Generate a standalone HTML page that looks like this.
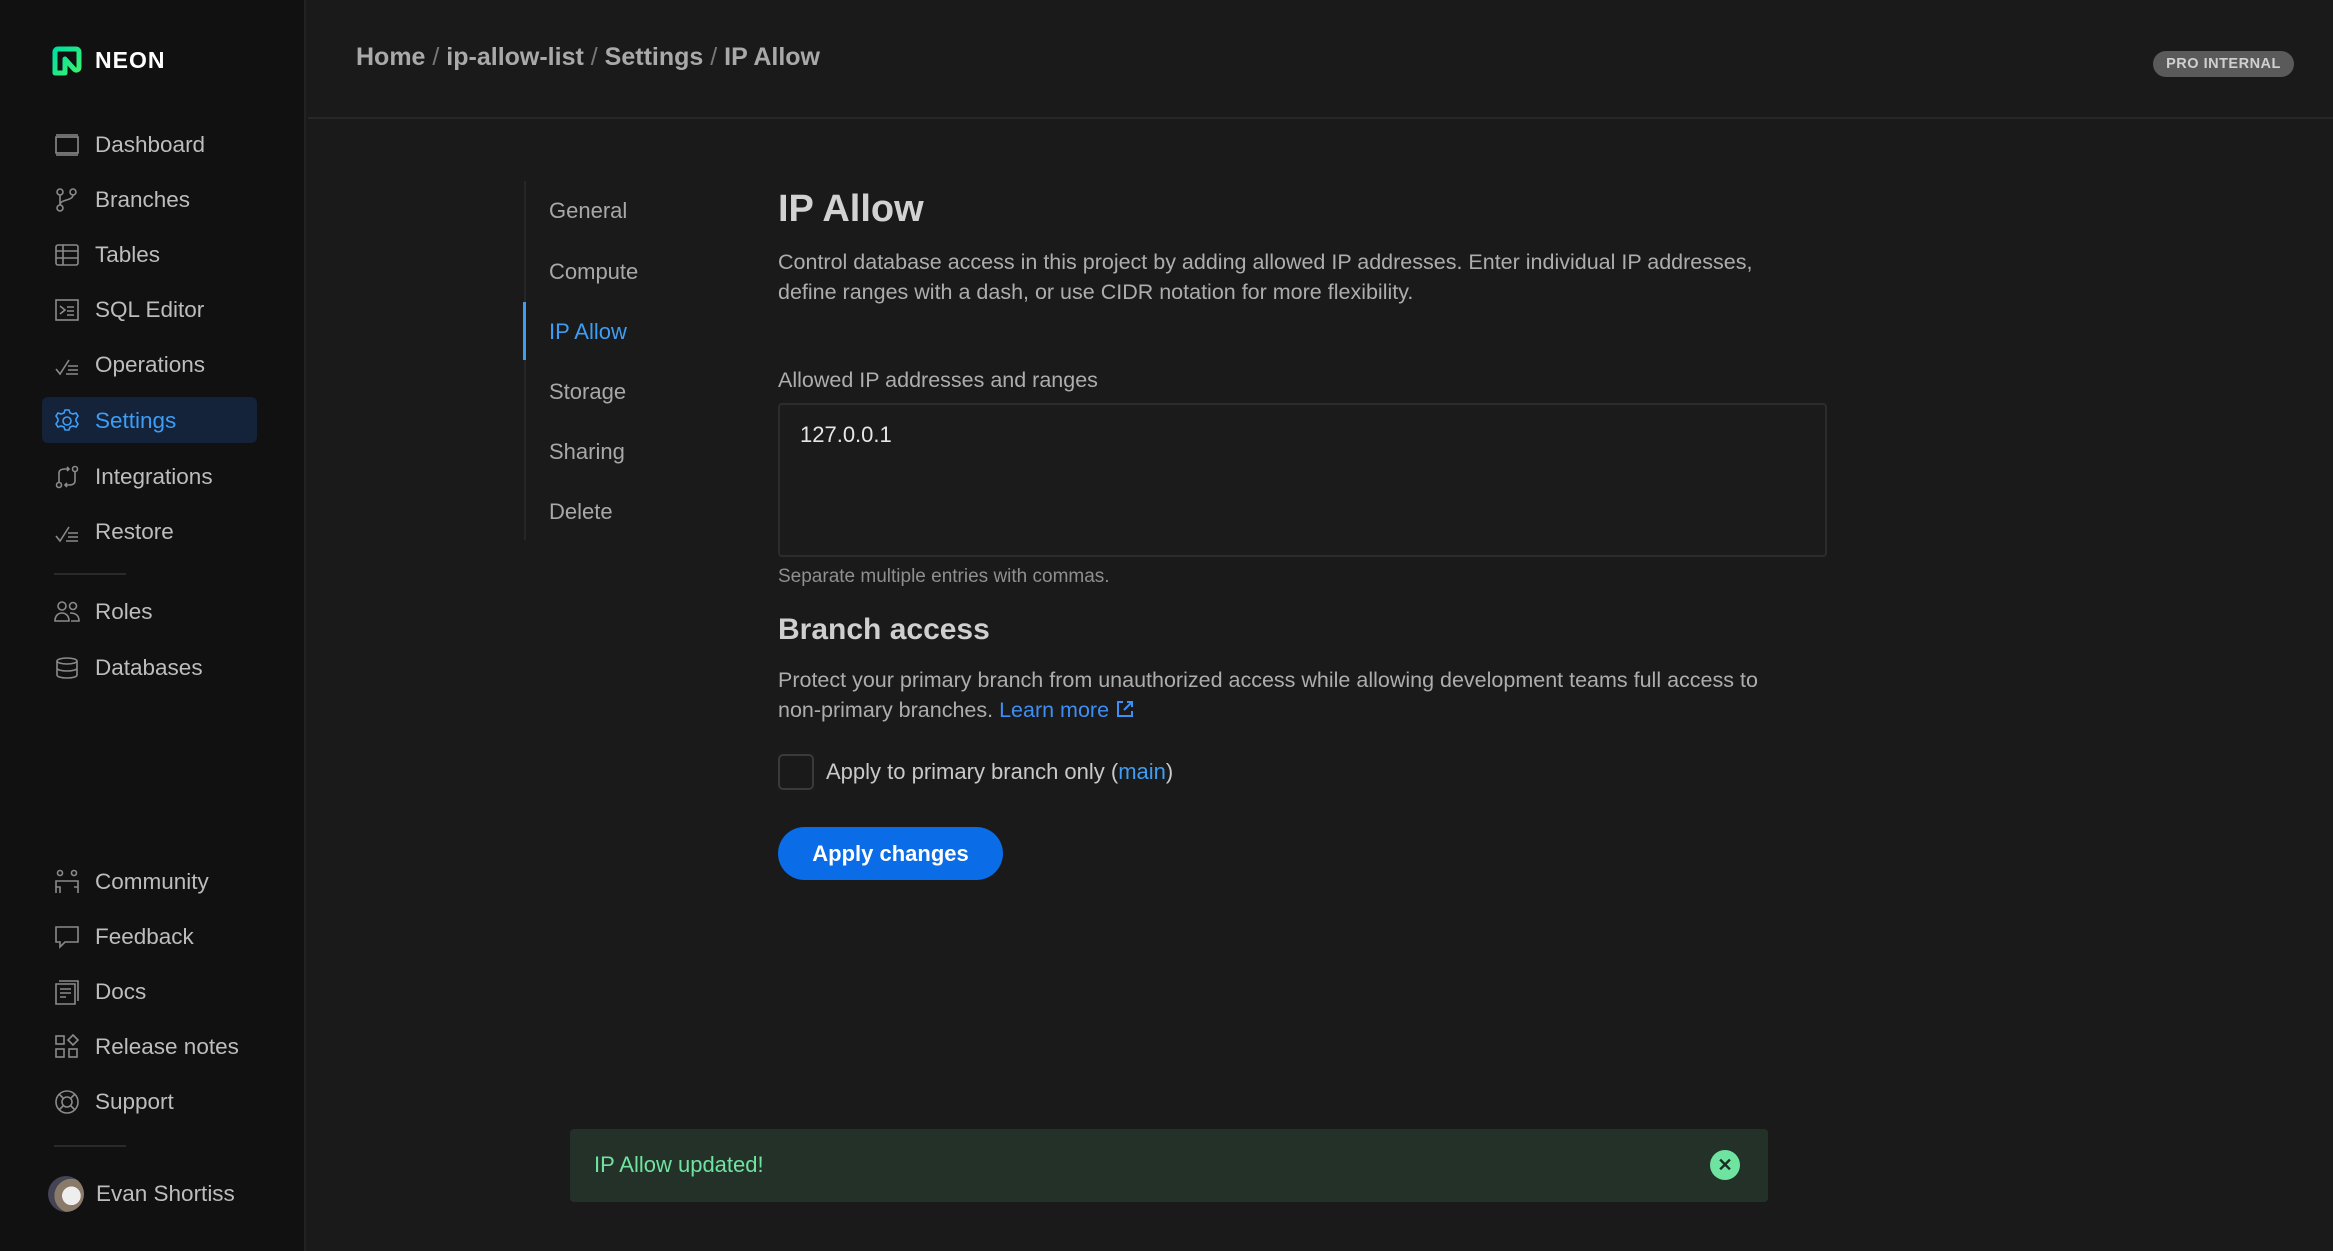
<!DOCTYPE html>
<html><head><meta charset="utf-8"><style>
*{box-sizing:border-box;margin:0;padding:0}
body{width:2333px;height:1251px;background:#1a1a1a;font-family:"Liberation Sans",sans-serif;position:relative;overflow:hidden;color:#c9c9c9}
.abs{position:absolute}
#side{left:0;top:0;width:306px;height:1251px;background:#111;border-right:2px solid #222}
.nav{position:absolute;left:54px;height:40px;display:flex;align-items:center;font-size:22.5px;color:#bdbdbd;font-weight:400;top:0}
.nav svg{width:26px;height:26px;margin-right:15px;stroke:#8a8a8a;fill:none;stroke-width:1.6}
.hl{left:42px;top:397px;width:215px;height:46px;background:#14233a;border-radius:6px}
.div{height:2px;background:#2a2a2a;width:72px;left:54px}
#hdr{left:308px;top:0;right:0;height:119px;border-bottom:2px solid #272727}
.sub{position:absolute;left:549px;font-size:22px;color:#a8a8a8;font-weight:500}
p.t{font-size:21.5px;line-height:30px;color:#adadad}
</style></head><body>
<div id="side" class="abs">
 <svg class="abs" style="left:51px;top:45px" width="32" height="32" viewBox="0 0 32 32"><defs><linearGradient id="g" x1="0" y1="0" x2="1" y2="1"><stop offset="0" stop-color="#00e0a0"/><stop offset="1" stop-color="#3cf06e"/></linearGradient></defs><path d="M4 28V7a3 3 0 0 1 3-3h18a3 3 0 0 1 3 3v15c0 3-3 4-5 2l-9-10v14z" fill="none" stroke="url(#g)" stroke-width="5" stroke-linejoin="round"/></svg>
 <div class="abs" style="left:95px;top:47px;font-size:23px;font-weight:700;color:#fff;letter-spacing:1px">NEON</div>
 <div class="abs hl"></div>
 <div class="nav" style="top:125px"><svg viewBox="0 0 26 26"><rect x="2" y="5" width="22" height="16"/><path d="M2 3h22M2 23h22"/></svg>Dashboard</div>
 <div class="nav" style="top:180px"><svg viewBox="0 0 26 26"><circle cx="6" cy="5" r="3"/><circle cx="19" cy="5" r="3"/><circle cx="6" cy="21" r="3"/><path d="M6 8v10M19 8c0 6-13 4-13 10"/></svg>Branches</div>
 <div class="nav" style="top:235px"><svg viewBox="0 0 26 26"><rect x="2" y="3" width="22" height="20" rx="2"/><path d="M2 9h22M2 16h22M9 3v20"/></svg>Tables</div>
 <div class="nav" style="top:290px"><svg viewBox="0 0 26 26"><rect x="2" y="3" width="22" height="20"/><path d="M6 9l5 4-5 4M13 10h7M13 14h7M13 18h7"/></svg>SQL Editor</div>
 <div class="nav" style="top:345px"><svg viewBox="0 0 26 26"><path d="M2 17l4 5 9-14M14 14h10M14 18h10M12 22h12"/></svg>Operations</div>
 <div class="nav" style="top:401px;color:#3d9df5"><svg viewBox="0 0 26 26" style="stroke:#3d9df5"><circle cx="13" cy="13" r="4"/><path d="M11 2h4l1 3 3 1 3-1 2 3-2 3v2l2 3-2 3-3-1-3 1-1 3h-4l-1-3-3-1-3 1-2-3 2-3v-2L2 8l2-3 3 1 3-1z"/></svg>Settings</div>
 <div class="nav" style="top:457px"><svg viewBox="0 0 26 26"><circle cx="5" cy="21" r="2.5"/><circle cx="21" cy="5" r="2.5"/><path d="M5 18V9c0-3 3-4 6-4h4M21 8v9c0 3-3 4-6 4h-4M13 3l2 2-2 2M13 19l-2 2 2 2"/></svg>Integrations</div>
 <div class="nav" style="top:512px"><svg viewBox="0 0 26 26"><path d="M2 17l4 5 9-14M14 14h10M14 18h10M12 22h12"/></svg>Restore</div>
 <div class="abs div" style="top:573px"></div>
 <div class="nav" style="top:592px"><svg viewBox="0 0 26 26"><circle cx="8" cy="7" r="4"/><circle cx="19" cy="7" r="3.5"/><path d="M1 22c0-6 4-8 7-8s7 2 7 8zM16 14c5 0 9 2 9 8h-8"/></svg>Roles</div>
 <div class="nav" style="top:648px"><svg viewBox="0 0 26 26"><ellipse cx="13" cy="6" rx="10" ry="3"/><path d="M3 6v14c0 2 5 3 10 3s10-1 10-3V6M3 13c0 2 5 3 10 3s10-1 10-3"/></svg>Databases</div>
 <div class="nav" style="top:862px"><svg viewBox="0 0 26 26"><circle cx="6" cy="4" r="2.5"/><circle cx="20" cy="4" r="2.5"/><path d="M2 24V12h6l10 0h6v12M2 18h4v6M20 18h4"/></svg>Community</div>
 <div class="nav" style="top:917px"><svg viewBox="0 0 26 26"><path d="M2 3h22v15H11l-5 5v-5H2z"/></svg>Feedback</div>
 <div class="nav" style="top:972px"><svg viewBox="0 0 26 26"><path d="M5 2h19v20M2 5h19v20H2zM6 10h11M6 14h11M6 18h6"/></svg>Docs</div>
 <div class="nav" style="top:1027px"><svg viewBox="0 0 26 26"><rect x="2" y="2" width="8" height="8"/><rect x="2" y="15" width="8" height="8"/><rect x="15" y="15" width="8" height="8"/><path d="M19 1l5 5-5 5-5-5z"/></svg>Release notes</div>
 <div class="nav" style="top:1082px"><svg viewBox="0 0 26 26"><circle cx="13" cy="13" r="11"/><circle cx="13" cy="13" r="5"/><path d="M5 5l4 4M21 5l-4 4M5 21l4-4M21 21l-4-4"/></svg>Support</div>
 <div class="abs div" style="top:1145px"></div>
 <div class="nav" style="top:1174px;left:48px"><div style="width:36px;height:36px;border-radius:50%;background:radial-gradient(circle at 65% 55%,#eee 0 30%,#8a7a6a 31% 55%,#445 56%);margin-right:12px"></div>Evan Shortiss</div>
</div>
<div id="hdr" class="abs"></div>
<div class="abs" style="left:356px;top:43px;font-size:25px;font-weight:600;color:#a9a9a9">Home <span style="color:#777;font-weight:400">/</span> ip-allow-list <span style="color:#777;font-weight:400">/</span> Settings <span style="color:#777;font-weight:400">/</span> IP Allow</div>
<div class="abs" style="left:2153px;top:51px;width:141px;height:26px;border-radius:13px;background:#5a5a5a;color:#d0d0d0;font-size:14.5px;font-weight:700;text-align:center;line-height:26px;letter-spacing:.5px">PRO INTERNAL</div>
<div class="abs" style="left:524px;top:181px;width:2px;height:359px;background:#262626"></div>
<div class="abs" style="left:523px;top:302px;width:3px;height:58px;background:#3d9df5"></div>
<div class="sub" style="top:198px">General</div>
<div class="sub" style="top:259px">Compute</div>
<div class="sub" style="top:319px;color:#3d9df5">IP Allow</div>
<div class="sub" style="top:379px">Storage</div>
<div class="sub" style="top:439px">Sharing</div>
<div class="sub" style="top:499px">Delete</div>
<div class="abs" style="left:778px;top:188px;font-size:38px;font-weight:700;color:#d2d2d2">IP Allow</div>
<p class="abs t" style="left:778px;top:247px;width:1020px">Control database access in this project by adding allowed IP addresses. Enter individual IP addresses, define ranges with a dash, or use CIDR notation for more flexibility.</p>
<div class="abs" style="left:778px;top:368px;font-size:21.5px;color:#adadad;font-weight:500">Allowed IP addresses and ranges</div>
<div class="abs" style="left:778px;top:403px;width:1049px;height:154px;border:2px solid #2c2c2c;border-radius:4px;background:#1b1b1b"></div>
<div class="abs" style="left:800px;top:422px;font-size:22px;color:#e6e6e6">127.0.0.1</div>
<div class="abs" style="left:778px;top:566px;font-size:19px;color:#8f8f8f">Separate multiple entries with commas.</div>
<div class="abs" style="left:778px;top:613px;font-size:30px;font-weight:700;color:#cfcfcf">Branch access</div>
<p class="abs t" style="left:778px;top:665px;width:1040px">Protect your primary branch from unauthorized access while allowing development teams full access to non&#8209;primary branches. <span style="color:#3d8ef5">Learn more</span> <svg width="20" height="20" viewBox="0 0 20 20" style="vertical-align:-2px" fill="none" stroke="#3d8ef5" stroke-width="2"><path d="M8 3H3v14h14v-5M12 3h5v5M17 3l-8 8"/></svg></p>
<div class="abs" style="left:778px;top:754px;width:36px;height:36px;border:2px solid #3a3a3a;border-radius:5px"></div>
<div class="abs" style="left:826px;top:759px;font-size:22px;color:#c9c9c9;font-weight:500">Apply to primary branch only (<span style="color:#3d9df5">main</span>)</div>
<div class="abs" style="left:778px;top:827px;width:225px;height:53px;border-radius:27px;background:#0a6ce6;color:#fff;font-size:22px;font-weight:700;text-align:center;line-height:53px">Apply changes</div>
<div class="abs" style="left:570px;top:1129px;width:1198px;height:73px;border-radius:4px;background:#233128"></div>
<div class="abs" style="left:594px;top:1152px;font-size:22px;color:#6fe3a0">IP Allow updated!</div>
<div class="abs" style="left:1710px;top:1150px;width:30px;height:30px;border-radius:50%;background:#6fe3a0;color:#1d2a22;font-size:18px;font-weight:700;text-align:center;line-height:30px">✕</div>
</body></html>
